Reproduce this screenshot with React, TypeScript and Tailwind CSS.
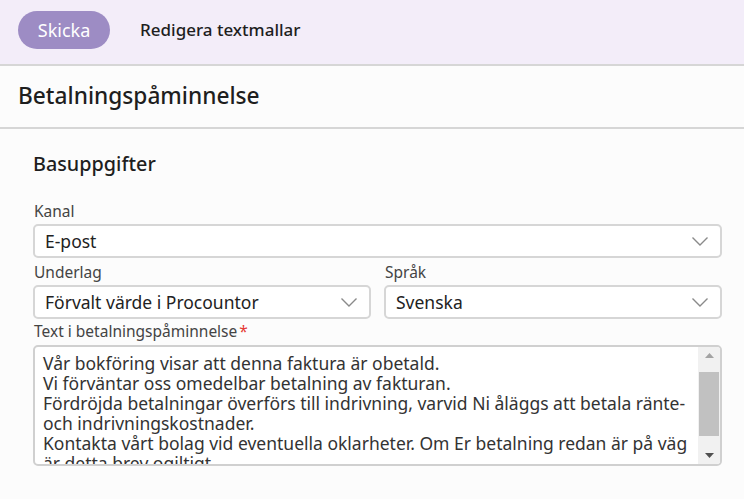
import React from "react";

const Chevron = () => (
  <svg width="16" height="9" viewBox="0 0 16 9" fill="none" className="shrink-0">
    <polyline points="0.5,0.5 8,8 15.5,0.5" stroke="#8a8a8a" strokeWidth="1.4" />
  </svg>
);

const Select = ({ value, className = "" }: { value: string; className?: string }) => (
  <div
    className={`flex items-center justify-between h-[34px] pl-[10px] pr-[12px] bg-white border-2 border-[#d6d6d6] rounded-[5px] text-[17.5px] text-[#222] ${className}`}
  >
    <span>{value}</span>
    <Chevron />
  </div>
);

const lines = [
  "Vår bokföring visar att denna faktura är obetald.",
  "Vi förväntar oss omedelbar betalning av fakturan.",
  "Fördröjda betalningar överförs till indrivning, varvid Ni åläggs att betala ränte-",
  "och indrivningskostnader.",
  "Kontakta vårt bolag vid eventuella oklarheter. Om Er betalning redan är på väg",
  "är detta brev ogiltigt.",
];

export default function App() {
  return (
    <div
      className="min-h-[499px] bg-[#fcfcfc] text-[#222]"
      style={{ fontFamily: '"Noto Sans", "Open Sans", sans-serif' }}
    >
      {/* Toolbar */}
      <div className="h-[66px] bg-[#f3edf9] border-b-2 border-[#d6d6d6] flex items-center px-[18px] pb-[4px] gap-[30px]">
        <button className="h-[38px] w-[92px] rounded-full bg-[#9d8cc4] text-white text-[18px]">
          Skicka
        </button>
        <span className="text-[17px] font-medium text-[#1e1e1e]">Redigera textmallar</span>
      </div>

      {/* Title */}
      <div className="h-[63px] border-b-2 border-[#d6d6d6] flex items-center px-[18px] bg-[#fcfcfc]">
        <h1 className="text-[22.7px] font-medium text-[#1e1e1e]">Betalningspåminnelse</h1>
      </div>

      {/* Form */}
      <div className="px-[33px] pt-[22px]">
        <h2 className="text-[19.8px] font-medium text-[#1e1e1e] leading-[26px]">Basuppgifter</h2>

        <div className="mt-[24px] w-[689px]">
          <label className="block text-[15.5px] text-[#444] leading-[20px] pl-[1px]">Kanal</label>
          <Select value="E-post" className="mt-[3px]" />

          <div className="grid grid-cols-2 gap-[13px] mt-[4px]">
            <div>
              <label className="block text-[15.5px] text-[#444] leading-[20px] pl-[1px]">Underlag</label>
              <Select value="Förvalt värde i Procountor" className="mt-[3px]" />
            </div>
            <div>
              <label className="block text-[15.5px] text-[#444] leading-[20px] pl-[1px]">Språk</label>
              <Select value="Svenska" className="mt-[3px]" />
            </div>
          </div>

          <label className="block text-[15.5px] text-[#444] leading-[20px] pl-[1px] mt-[2px]">
            Text i betalningspåminnelse<span className="text-[#e53935] ml-[2px]">*</span>
          </label>
          <div className="mt-[4px] h-[121px] flex bg-white border-2 border-[#d0d0d0] rounded-[5px] overflow-hidden">
            <div className="flex-1 overflow-hidden pl-[8px] pt-[6px] text-[17.5px] leading-[20px] text-[#333]">
              {lines.map((l) => (
                <div key={l} className="whitespace-nowrap">{l}</div>
              ))}
            </div>
            <div className="w-[22px] bg-[#f1f1f1] flex flex-col items-center">
              <div className="h-[17px] flex items-center justify-center">
                <svg width="9" height="5" viewBox="0 0 9 5"><polygon points="0,5 4.5,0 9,5" fill="#a3a3a3" /></svg>
              </div>
              <div className="w-[20px] h-[64px] bg-[#c1c1c1] mt-[8px]" />
              <div className="flex-1" />
              <div className="h-[17px] flex items-center justify-center">
                <svg width="9" height="5" viewBox="0 0 9 5"><polygon points="0,0 9,0 4.5,5" fill="#505050" /></svg>
              </div>
            </div>
          </div>
        </div>
      </div>
    </div>
  );
}
